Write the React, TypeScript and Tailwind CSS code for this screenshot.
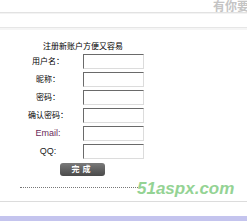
export default function App() {
  const rows = [
    { label: '用户名：', cls: 'text-[8px] text-black' },
    { label: '昵称：', cls: 'text-[8px] text-black' },
    { label: '密码：', cls: 'text-[8px] text-black' },
    { label: '确认密码：', cls: 'text-[8px] text-black' },
    { label: 'Email:', cls: 'text-[9px] text-[#6a2a5a]' },
    { label: 'QQ:', cls: 'text-[9px] text-[#222]' },
  ]

  return (
    <div className="relative h-[222px] w-[247px] overflow-hidden bg-white font-['Liberation_Sans','Noto_Sans_CJK_SC',sans-serif]">
      {/* header strip */}
      <div className="flex h-[13px] justify-end overflow-hidden border-b border-[#e2e2e2]">
        <span className="mr-[-14px] mt-[1px] whitespace-nowrap text-[12px] font-bold leading-[12px] text-[#c4c4c4]">
          有你要的
        </span>
      </div>
      <div className="h-[1px] bg-[#f3f3f3]" />
      <div className="mt-[13px] h-[1px] bg-[#e6e6e6]" />
      <div className="h-[2px] bg-[#f5f5f5]" />

      {/* form */}
      <div className="pl-[43px] pt-[12px] text-[8px] leading-[9px] text-black">注册新账户方便又容易</div>

      <div className="mt-[3px] ml-[14px] grid grid-cols-[68px_61px] gap-x-[1px] gap-y-[3px]">
        {rows.map((r) => (
          <div key={r.label} className="contents">
            <div className={'flex h-[15px] items-center justify-center ' + r.cls}>{r.label}</div>
            <input
              type="text"
              className="h-[15px] w-[61px] border border-t-[#6a6a6a] border-l-[#6a6a6a] border-b-[#dcdcdc] border-r-[#dcdcdc] bg-white outline-none"
            />
          </div>
        ))}
      </div>

      <div className="mt-[4px] pl-[60px]">
        <button className="flex h-[13px] w-[45px] items-center justify-center rounded-[3px] bg-gradient-to-b from-[#7a7a7a] to-[#4a4a4a] text-[8px] font-bold leading-none tracking-[3px] text-white">
          完成
        </button>
      </div>

      <div className="ml-[20px] mt-[11px] w-[120px] border-t border-dotted border-[#777]" />

      <div className="mt-[13px] h-[1px] bg-[#dcdcdc]" />
      <div className="mt-[14px] h-[5px] bg-[#c4c4ee]" />

      {/* watermark */}
      <div className="absolute left-[137px] top-[180px] text-[17px] font-bold italic leading-[17px] text-[#94d394]">
        51aspx.com
      </div>
    </div>
  )
}
